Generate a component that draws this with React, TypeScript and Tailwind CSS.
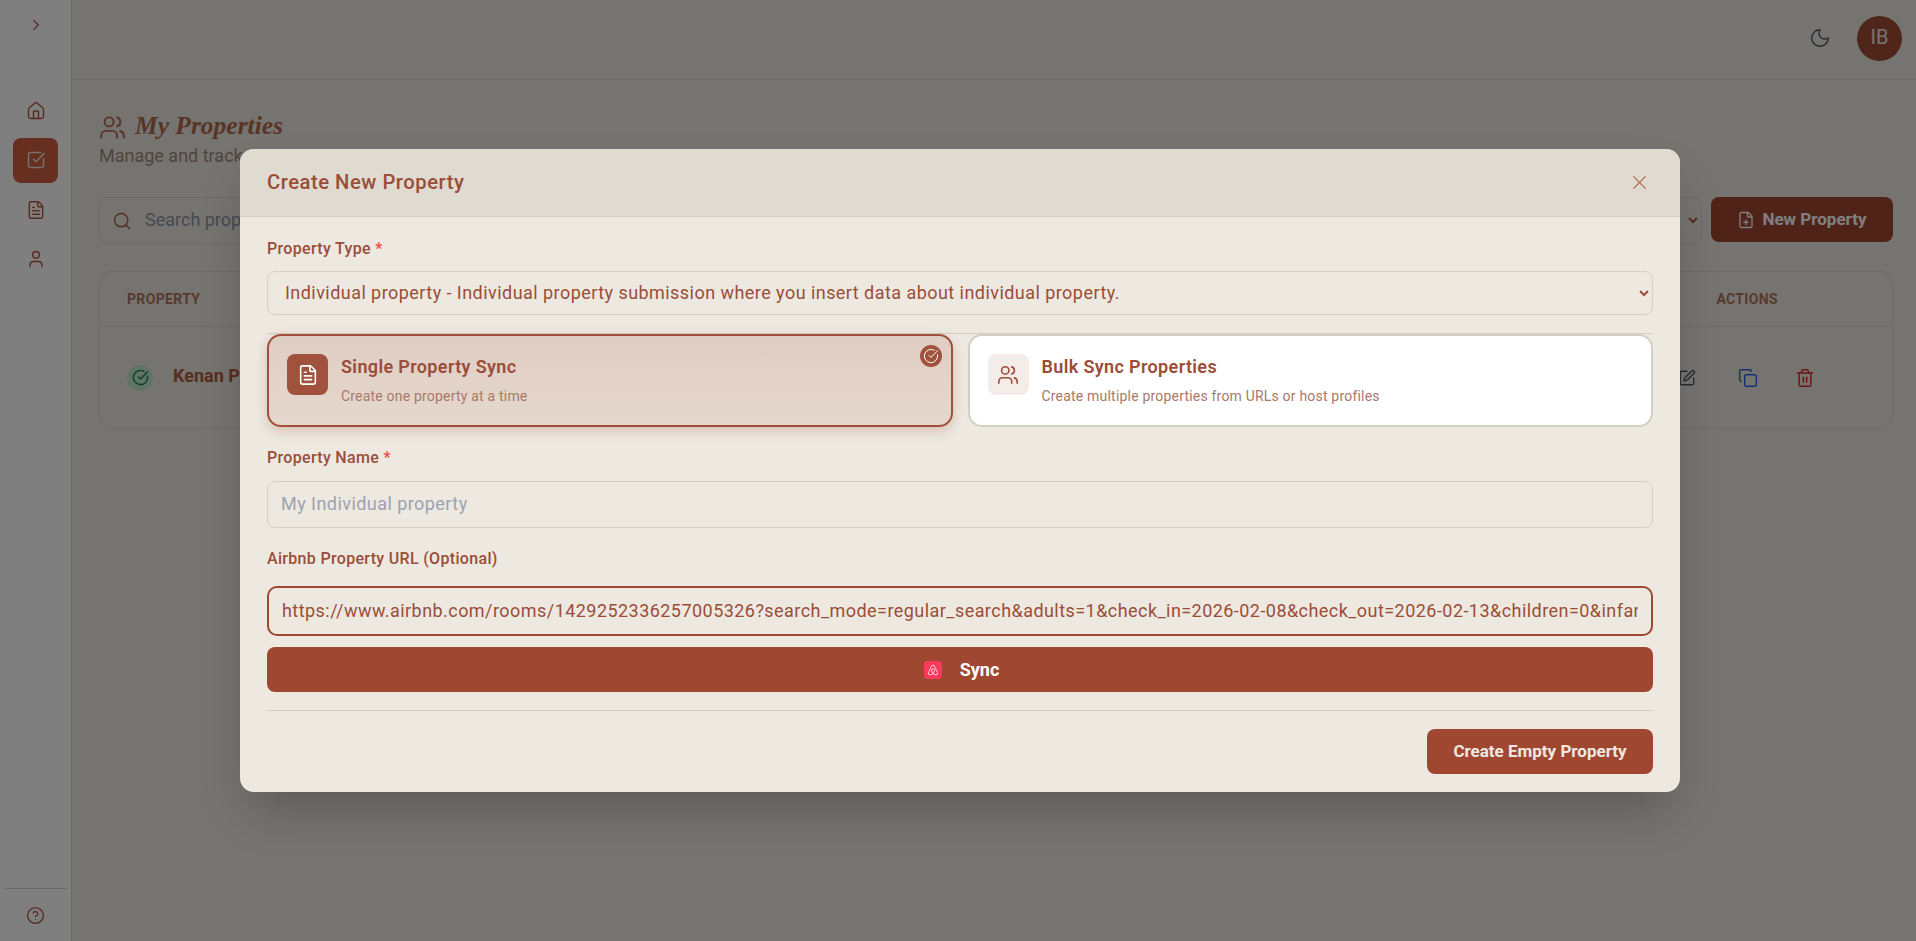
import {
  ChevronRight,
  CircleCheckBig,
  CircleHelp,
  Copy,
  FilePlus,
  FileText,
  House,
  Moon,
  Search,
  SquareCheckBig,
  SquarePen,
  Trash2,
  User,
  Users,
  X,
} from 'lucide-react';
import { FaAirbnb } from 'react-icons/fa';

const url =
  'https://www.airbnb.com/rooms/1429252336257005326?search_mode=regular_search&adults=1&check_in=2026-02-08&check_out=2026-02-13&children=0&infants=0&pets=0';

function Sidebar() {
  return (
    <aside className="w-[72px] shrink-0 h-full bg-white border-r border-[#d8d4cc] flex flex-col items-center text-[#b0563f]">
      <div className="h-[50px] flex items-center justify-center">
        <ChevronRight size={18} strokeWidth={1.5} />
      </div>
      <nav className="mt-[38px] flex flex-col items-center gap-[4.5px]">
        <div className="w-[45px] h-[45px] flex items-center justify-center">
          <House size={20} strokeWidth={1.75} />
        </div>
        <div className="w-[45px] h-[45px] rounded-lg bg-[#ce5e40] text-[#ede9e1] flex items-center justify-center">
          <SquareCheckBig size={20} strokeWidth={1.75} />
        </div>
        <div className="w-[45px] h-[45px] flex items-center justify-center">
          <FileText size={20} strokeWidth={1.75} />
        </div>
        <div className="w-[45px] h-[45px] flex items-center justify-center">
          <User size={20} strokeWidth={1.75} />
        </div>
      </nav>
      <div className="mt-auto w-[62px] border-t border-[#d8d4cc] h-[53px] flex items-center justify-center">
        <CircleHelp size={19} strokeWidth={1.75} />
      </div>
    </aside>
  );
}

function Page() {
  return (
    <main className="flex-1 min-w-0 h-full bg-[#ede9e1]">
      <header className="h-[80px] border-b border-[#d8d4cc] flex items-center justify-end pr-[14px] pb-[3px]">
        <Moon size={22} strokeWidth={1.5} className="text-[#4b5563] mr-[26px]" />
        <div className="w-[45px] h-[45px] pb-[2px] rounded-full bg-[#a04c34] text-[#ede9e1] text-[20px] flex items-center justify-center">
          IB
        </div>
      </header>

      <div className="pl-[27px] pr-[23px]">
        <div className="mt-[30px] flex items-center gap-[9px] h-[34px]">
          <Users size={27} strokeWidth={1.75} className="text-[#b06a4f]" />
          <h1 className="pb-[2px] font-['Liberation_Serif',serif] italic font-bold text-[25.5px] text-[#b06a4f]">
            My Properties
          </h1>
        </div>
        <p className="text-[18px] leading-[24px] text-[#a0897c]">Manage and track your properties</p>

        <div className="mt-[29px] flex gap-[9px]">
          <div className="flex-1 h-[47px] border border-[#d8d4cc] rounded-lg flex items-center pl-[12px]">
            <Search size={20} strokeWidth={1.75} className="text-[#a8604c]" />
            <span className="ml-[13px] pb-[2px] text-[18px] text-[#8b93a3]">Search properties...</span>
          </div>
          <select className="w-[200px] h-[47px] rounded-lg border border-[#d8d4cc] text-[#b0563f] outline-none">
            <option>All</option>
          </select>
          <div className="w-[182px] h-[45px] rounded-lg bg-[#9f4730] text-white font-bold text-[17px] flex items-center justify-center gap-[7px]">
            <FilePlus size={18} strokeWidth={1.75} />
            New Property
          </div>
        </div>

        <div className="mt-[27px] h-[158px] border border-[#d8d4cc] rounded-[14px]">
          <div className="h-[55px] border-b border-[#d8d4cc] flex items-center justify-between pl-[27px] pr-[114px] text-[14px] font-bold text-[#b0745c] tracking-wide">
            <span>PROPERTY</span>
            <span>ACTIONS</span>
          </div>
          <div className="h-[102px] pb-[1px] flex items-center justify-between pl-[27px] pr-[77px]">
            <div className="flex items-center gap-[20px]">
              <div className="w-[26px] h-[26px] rounded-full bg-[#c3e6cf] text-[#16803c] flex items-center justify-center">
                <CircleCheckBig size={17} />
              </div>
              <span className="pb-[5px] text-[18px] font-bold text-[#b05a40]">Kenan Property</span>
            </div>
            <div className="flex items-center gap-[37px]">
              <SquarePen size={18} strokeWidth={1.75} className="text-[#4b5563] mr-[5px]" />
              <Copy size={20} strokeWidth={1.75} className="text-[#2563eb]" />
              <Trash2 size={20} strokeWidth={1.75} className="text-[#dc2626]" />
            </div>
          </div>
        </div>
      </div>
    </main>
  );
}

function Modal() {
  return (
    <div className="absolute inset-0 bg-black/50 flex items-center justify-center pl-[4px]">
      <div className="w-[1440px] h-[643px] rounded-[14px] overflow-hidden bg-[#ede9e1] shadow-2xl text-[#9b4d38]">
        <div className="h-[68px] pb-[1px] bg-[#dfdbd0] border-b border-[#d4cfc3] flex items-center justify-between pl-[27px] pr-[29px]">
          <h2 className="text-[20.25px] font-medium tracking-[0.025em]">Create New Property</h2>
          <X size={23} strokeWidth={1.25} className="text-[#b8705c]" />
        </div>

        <div className="px-[27px]">
          <div className="mt-[22px] text-[16px] font-medium leading-[20px] tracking-[0.02em]">
            Property Type <span className="text-[#ef4444]">*</span>
          </div>
          <select className="mt-[12px] w-full h-[44px] pl-[13px] pr-[2px] pb-[2px] rounded-lg border border-[#d4cfc3] text-[18px] tracking-[0.025em] outline-none">
            <option>Individual property - Individual property submission where you insert data about individual property.</option>
          </select>

          <div className="mt-[18px] border-t border-[#d4cfc3] grid grid-cols-2 gap-[15px]">
            <div className="relative h-[93px] rounded-[14px] border-2 border-[#a0503a] bg-gradient-to-b from-[#dfcdc3] to-[#e6d8ce] shadow-[0_4px_12px_rgba(159,71,48,0.25)] flex pl-[18px] pt-[18px] gap-[13px]">
              <div className="w-[41px] h-[41px] rounded-lg bg-[#a0523d] text-white flex items-center justify-center">
                <FileText size={22} strokeWidth={1.75} />
              </div>
              <div>
                <div className="-mt-[1px] text-[18px] font-semibold leading-[27px] tracking-[0.02em]">Single Property Sync</div>
                <div className="mt-[6px] text-[14px] leading-[20px] tracking-[0.014em] text-[#a8796b]">Create one property at a time</div>
              </div>
              <div className="absolute top-[9px] right-[9px] w-[22px] h-[22px] rounded-full bg-[#a0523d] text-white flex items-center justify-center">
                <CircleCheckBig size={16} strokeWidth={1.5} />
              </div>
            </div>

            <div className="h-[93px] rounded-[14px] border-2 border-[#d4cfc3] bg-white flex pl-[18px] pt-[18px] gap-[13px]">
              <div className="w-[41px] h-[41px] rounded-lg bg-[#f4ece8] flex items-center justify-center">
                <Users size={22} strokeWidth={1.75} />
              </div>
              <div>
                <div className="-mt-[1px] text-[18px] font-semibold leading-[27px] tracking-[0.02em]">Bulk Sync Properties</div>
                <div className="mt-[6px] text-[14px] leading-[20px] tracking-[0.014em] text-[#a8796b]">Create multiple properties from URLs or host profiles</div>
              </div>
            </div>
          </div>

          <div className="mt-[21px] text-[16px] font-medium leading-[20px] tracking-[0.02em]">
            Property Name <span className="text-[#ef4444]">*</span>
          </div>
          <input
            placeholder="My Individual property"
            className="mt-[13px] block w-full h-[47px] px-[13px] pb-[2px] rounded-lg border border-[#d4cfc3] text-[18px] tracking-[0.025em] outline-none placeholder:text-[#9ca3af]"
          />

          <div className="mt-[21px] text-[16px] font-medium leading-[20px] tracking-[0.02em]">
            Airbnb Property URL (Optional)
          </div>
          <input
            defaultValue={url}
            className="mt-[17px] block w-full h-[50px] px-[13px] pb-[2px] rounded-[10px] border-2 border-[#9f4730] text-[18px] tracking-[0.025em] outline-none"
          />

          <button className="mt-[11px] w-full h-[45px] pl-[3px] pb-[1px] rounded-lg bg-[#9f4730] text-white text-[18px] font-bold flex items-center justify-center gap-[18px]">
            <span className="w-[18px] h-[18px] mt-[1px] rounded-[4px] bg-[#ff385c] flex items-center justify-center">
              <FaAirbnb size={12} />
            </span>
            Sync
          </button>

          <div className="mt-[18px] pt-[18px] border-t border-[#d4cfc3] flex justify-end">
            <button className="w-[226px] h-[45px] rounded-lg bg-[#9f4730] text-[#ede9e1] text-[17px] font-bold">
              Create Empty Property
            </button>
          </div>
        </div>
      </div>
    </div>
  );
}

export default function App() {
  return (
    <div className="relative w-full h-screen overflow-hidden flex font-['Roboto',sans-serif]">
      <Sidebar />
      <Page />
      <Modal />
    </div>
  );
}
